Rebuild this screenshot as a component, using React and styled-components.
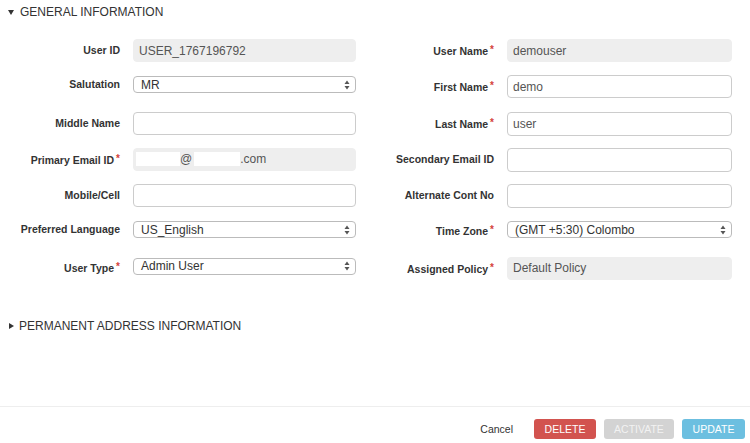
import React from 'react';
import styled, { createGlobalStyle } from 'styled-components';

const GlobalStyle = createGlobalStyle`
  html, body {
    margin: 0;
    padding: 0;
    background: #fff;
    font-family: "Liberation Sans", Arial, Helvetica, sans-serif;
  }
  * { box-sizing: border-box; }
`;

const Page = styled.div`
  height: 443px;
  display: flex;
  flex-direction: column;
`;

const SectionHeader = styled.div`
  display: flex;
  align-items: center;
  gap: ${p => (p.open ? '6px' : '5px')};
  padding: ${p => (p.open ? '5px 0 0 8px' : '0 0 0 9px')};
  font-size: 12px;
  color: #333;
  height: 14px;
  line-height: 14px;
  box-sizing: content-box;
`;

const Caret = styled.span`
  width: 0;
  height: 0;
  ${p => p.open
    ? `border-left: 3.5px solid transparent;
       border-right: 3.5px solid transparent;
       border-top: 5px solid #333;`
    : `border-top: 3.5px solid transparent;
       border-bottom: 3.5px solid transparent;
       border-left: 5px solid #333;`}
`;

const Form = styled.div`
  display: flex;
  padding-top: 20px;
`;

const Column = styled.div`
  display: flex;
  flex-direction: column;
  gap: 14.3px;
  margin-left: ${p => p.offset || 0}px;
`;

const Row = styled.div`
  display: grid;
  grid-template-columns: ${p => p.labelWidth}px ${p => p.fieldWidth}px;
  column-gap: ${p => p.gap}px;
  align-items: start;
  height: 22px;
`;

const Label = styled.div`
  text-align: right;
  font-size: 10.5px;
  font-weight: bold;
  color: #333;
  height: ${p => (p.select ? '17px' : '22px')};
  line-height: ${p => (p.select ? '19px' : '22px')};
  white-space: nowrap;
`;

const Star = styled.span`
  color: #d43f3a;
  font-size: 10px;
  vertical-align: 2px;
  margin-left: 2px;
`;

const Input = styled.div`
  height: ${p => (p.tall ? '24px' : '23px')};
  border: 1px solid ${p => (p.readOnly ? '#eee' : '#ccc')};
  background: ${p => (p.readOnly ? '#eee' : '#fff')};
  border-radius: 4px;
  padding: 0 5px;
  font-size: 12px;
  color: #555;
  display: flex;
  align-items: center;
  white-space: nowrap;
  overflow: hidden;
`;

const Select = styled.div`
  height: 17px;
  margin-top: 1px;
  border: 1px solid #bbb;
  border-radius: 4px;
  background: #fff;
  padding: 0 5px 0 7px;
  font-size: 12px;
  color: #333;
  display: flex;
  align-items: center;
  justify-content: space-between;
`;

const Mask = styled.span`
  display: inline-block;
  width: ${p => p.w}px;
  height: 14px;
  background: #fff;
  margin-left: ${p => p.ml || 0}px;
`;

const PermanentSection = styled.div`
  margin-top: 40px;
`;

const Footer = styled.div`
  margin-top: auto;
  border-top: 1px solid #eee;
  height: 37px;
  display: flex;
  align-items: flex-start;
  justify-content: flex-end;
  padding: 12px 5px 0 0;
  gap: 8px;
`;

const CancelLink = styled.span`
  font-size: 10.5px;
  color: #333;
  margin-right: 13px;
  padding-top: 4px;
`;

const Button = styled.div`
  height: 20px;
  width: ${p => p.w}px;
  border-radius: 3px;
  background: ${p => p.bg};
  color: ${p => p.fg || '#fff'};
  font-size: 10.5px;
  display: flex;
  align-items: center;
  justify-content: center;
`;

const Arrows = () => (
  <svg width="6" height="10" viewBox="0 0 6 10">
    <path d="M3 0.5 L5.5 4 L0.5 4 Z" fill="#555" />
    <path d="M3 9.5 L5.5 6 L0.5 6 Z" fill="#555" />
  </svg>
);

const Field = ({ label, required, value, type, readOnly, tall, labelWidth, fieldWidth, gap, children }) => (
  <Row labelWidth={labelWidth} fieldWidth={fieldWidth} gap={gap}>
    <Label select={type === 'select'}>
      {label}
      {required && <Star>*</Star>}
    </Label>
    {type === 'select' ? (
      <Select>
        <span>{value}</span>
        <Arrows />
      </Select>
    ) : (
      <Input readOnly={readOnly} tall={tall}>{children || value}</Input>
    )}
  </Row>
);

const leftFields = [
  { label: 'User ID', value: 'USER_1767196792', readOnly: true },
  { label: 'Salutation', value: 'MR', type: 'select' },
  { label: 'Middle Name', value: '' },
  { label: 'Primary Email ID', required: true, readOnly: true, email: true },
  { label: 'Mobile/Cell', value: '' },
  { label: 'Preferred Language', value: 'US_English', type: 'select' },
  { label: 'User Type', required: true, value: 'Admin User', type: 'select' },
];

const rightFields = [
  { label: 'User Name', required: true, value: 'demouser', readOnly: true },
  { label: 'First Name', required: true, value: 'demo' },
  { label: 'Last Name', required: true, value: 'user', tall: true },
  { label: 'Secondary Email ID', value: '', tall: true },
  { label: 'Alternate Cont No', value: '', tall: true },
  { label: 'Time Zone', required: true, value: '(GMT +5:30) Colombo', type: 'select' },
  { label: 'Assigned Policy', required: true, value: 'Default Policy', readOnly: true },
];

export default function App() {
  return (
    <Page>
      <GlobalStyle />
      <SectionHeader open>
        <Caret open />
        GENERAL INFORMATION
      </SectionHeader>
      <Form>
        <Column>
          {leftFields.map(f => (
            <Field key={f.label} {...f} labelWidth={120} fieldWidth={223} gap={13}>
              {f.email && (
                <>
                  <Mask w={44} ml={-3} />
                  @
                  <Mask w={46} ml={2} />
                  .com
                </>
              )}
            </Field>
          ))}
        </Column>
        <Column offset={13}>
          {rightFields.map(f => (
            <Field key={f.label} {...f} labelWidth={125} fieldWidth={225} gap={13} />
          ))}
        </Column>
      </Form>
      <PermanentSection>
        <SectionHeader>
          <Caret />
          PERMANENT ADDRESS INFORMATION
        </SectionHeader>
      </PermanentSection>
      <Footer>
        <CancelLink>Cancel</CancelLink>
        <Button w={62} bg="#d2534f">DELETE</Button>
        <Button w={70} bg="#d3d3d3" fg="#f2f2f2">ACTIVATE</Button>
        <Button w={63} bg="#6cbfe0">UPDATE</Button>
      </Footer>
    </Page>
  );
}
